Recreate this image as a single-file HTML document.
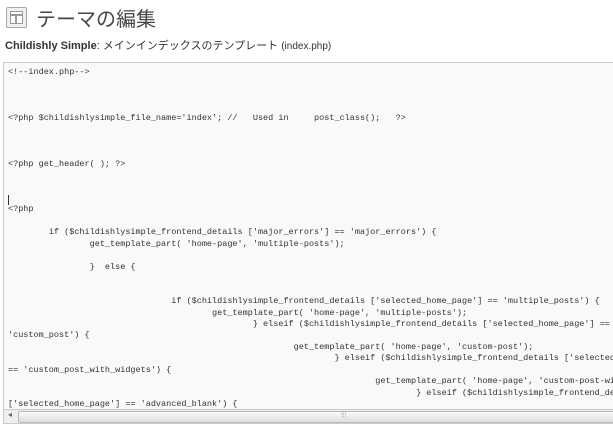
<!DOCTYPE html>
<html><head><meta charset="utf-8"><style>
body{margin:0;width:613px;height:429px;background:#fff;overflow:hidden;position:relative;font-family:"Liberation Sans","Noto Sans CJK JP",sans-serif;}
.icon{position:absolute;left:6px;top:7px;width:19px;height:19px;border:1px solid #a8a8a8;border-radius:2px;background:#f0f0f0;}
.icon i{position:absolute;border:1px solid #999;background:#fff;}
h2{position:absolute;left:36px;top:3px;margin:0;font-size:20px;font-weight:normal;color:#464646;}
.sub{position:absolute;left:5px;top:37px;font-size:11px;color:#333;}
.ta{position:absolute;left:3px;top:62px;width:620px;height:360px;border:1px solid #ccc;background:#f9f9f9;overflow:hidden;}
pre{margin:0;position:absolute;left:4px;top:4px;font-family:"Liberation Mono",monospace;font-size:8.5px;line-height:11.45px;color:#333;white-space:pre;}
.sb{position:absolute;left:0;top:346px;width:620px;height:13px;background:#eee;border-top:1px solid #ccc;}
.sb .th{position:absolute;left:14px;top:1px;width:660px;height:10px;background:linear-gradient(#fafafa,#ddd);border:1px solid #bbb;border-radius:2px;}
.cur{position:absolute;left:4px;top:132px;width:1px;height:10px;background:#333;}
</style></head><body>
<div class="icon"><i style="left:3px;top:3px;width:11px;height:2px"></i><i style="left:3px;top:7px;width:4px;height:7px"></i><i style="left:9px;top:7px;width:5px;height:7px"></i></div>
<h2>テーマの編集</h2>
<div class="sub"><b>Childishly Simple</b>: メインインデックスのテンプレート <span style="font-size:10px">(index.php)</span></div>
<div class="ta"><pre>&lt;!--index.php--&gt;



&lt;?php $childishlysimple_file_name='index'; //   Used in     post_class();   ?&gt;



&lt;?php get_header( ); ?&gt;



&lt;?php

        if ($childishlysimple_frontend_details ['major_errors'] == 'major_errors') {
                get_template_part( 'home-page', 'multiple-posts');

                }  else {


                                if ($childishlysimple_frontend_details ['selected_home_page'] == 'multiple_posts') {
                                        get_template_part( 'home-page', 'multiple-posts');
                                                } elseif ($childishlysimple_frontend_details ['selected_home_page'] ==
'custom_post') {
                                                        get_template_part( 'home-page', 'custom-post');
                                                                } elseif ($childishlysimple_frontend_details ['selected_home_page']
== 'custom_post_with_widgets') {
                                                                        get_template_part( 'home-page', 'custom-post-with-widgets');
                                                                                } elseif ($childishlysimple_frontend_details
['selected_home_page'] == 'advanced_blank') {</pre>
<div class="cur"></div>
<div class="sb"><span style="position:absolute;left:4px;top:0;font-size:8px;color:#666">◂</span><div class="th"><span style="position:absolute;left:322px;top:-2px;font-size:8px;color:#777">⦙⦙⦙</span></div></div>
</div>
</body></html>
